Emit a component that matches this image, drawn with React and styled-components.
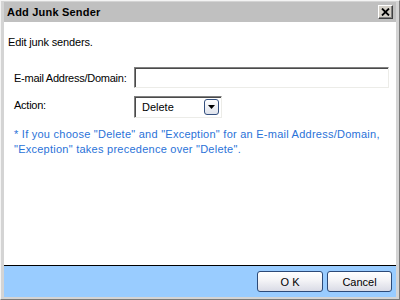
import React from "react";
import styled, { createGlobalStyle } from "styled-components";

const Global = createGlobalStyle`
  html, body { margin: 0; padding: 0; }
  body { width: 400px; height: 300px; overflow: hidden; background: #d6d6d6; }
  * { box-sizing: border-box; }
`;

const Window = styled.div`
  width: 400px;
  height: 300px;
  display: flex;
  flex-direction: column;
  background: #d4d4d4;
  border: 1px solid;
  border-color: #f4f4f4 #7a7a7a #7a7a7a #f4f4f4;
  padding: 1px 3px 2px 3px;
  font-family: "Liberation Sans", Arial, sans-serif;
  font-size: 11px;
  color: #000;
`;

const TitleBar = styled.div`
  height: 20px;
  flex: none;
  background: #c0c0c0;
  display: flex;
  align-items: center;
  justify-content: space-between;
  padding: 0 3px 0 3px;
`;

const Title = styled.span`
  font-weight: bold;
  font-size: 11px;
  letter-spacing: 0.2px;
  color: #000;
`;

const CloseButton = styled.div`
  width: 15px;
  height: 14px;
  background: #d4d0c8;
  border: 1px solid;
  border-color: #ffffff #404040 #404040 #ffffff;
  box-shadow: inset -1px -1px 0 #808080;
  display: flex;
  align-items: center;
  justify-content: center;
`;

const Body = styled.div`
  flex: 1;
  background: #fff;
  padding: 13px 4px 0 4px;
  display: flex;
  flex-direction: column;
`;

const Intro = styled.div`
  line-height: 14px;
  margin-bottom: 18px;
  letter-spacing: -0.15px;
`;

const Form = styled.div`
  padding-left: 6px;
  display: flex;
  flex-direction: column;
  gap: 8px;
`;

const Row = styled.div`
  display: grid;
  grid-template-columns: 120px 1fr;
  align-items: center;
`;

const Label = styled.label`
  line-height: 14px;
  letter-spacing: -0.25px;
  margin-top: ${(p) => p.$shift || 0}px;
`;

const TextBox = styled.input`
  width: 255px;
  height: 21px;
  margin: 0;
  border: 1px solid;
  border-color: #808080 #ecece8 #ecece8 #808080;
  box-shadow: inset 1px 1px 0 #4a4a4a;
  background: #fff;
  outline: none;
  font: inherit;
`;

const SelectBox = styled.div`
  width: 88px;
  height: 22px;
  border: 1px solid;
  border-color: #808080 #ecece8 #ecece8 #808080;
  box-shadow: inset 1px 1px 0 #4a4a4a;
  display: flex;
  align-items: center;
  justify-content: space-between;
  padding: 0 2px 0 7px;
  background: #fff;
`;

const DropButton = styled.div`
  width: 15px;
  height: 16px;
  border: 1px solid #34507f;
  border-radius: 3px;
  background: linear-gradient(#ffffff, #dfe3ec);
  display: flex;
  align-items: center;
  justify-content: center;
`;

const Note = styled.div`
  color: #2a72d8;
  line-height: 15px;
  margin-top: 1px;
  letter-spacing: 0.25px;
`;

const Footer = styled.div`
  height: 32px;
  flex: none;
  background: #99ccff;
  border-top: 1px solid #000;
  display: flex;
  align-items: center;
  justify-content: flex-end;
  gap: 4px;
  padding: 0 4px 0 0;
`;

const Button = styled.button`
  width: ${(p) => p.$w}px;
  height: 21px;
  margin: 0;
  border: 1px solid #2c4a78;
  border-radius: 3px;
  background: linear-gradient(#ffffff 0%, #f3f3f6 45%, #d9dbe6 100%);
  font-family: "Liberation Sans", Arial, sans-serif;
  font-size: 11px;
  color: #000;
  padding: 0;
`;

export default function App() {
  return (
    <>
      <Global />
      <Window>
        <TitleBar>
          <Title>Add Junk Sender</Title>
          <CloseButton>
            <svg width="9" height="8" viewBox="0 0 9 8">
              <path d="M1 0.5 L8 7.5 M8 0.5 L1 7.5" stroke="#000" strokeWidth="1.8" />
            </svg>
          </CloseButton>
        </TitleBar>
        <Body>
          <Intro>Edit junk senders.</Intro>
          <Form>
            <Row>
              <Label>E-mail Address/Domain:</Label>
              <TextBox type="text" />
            </Row>
            <Row>
              <Label $shift={-5}>Action:</Label>
              <SelectBox>
                <span>Delete</span>
                <DropButton>
                  <svg width="7" height="4" viewBox="0 0 7 4">
                    <path d="M0 0 L7 0 L3.5 4 Z" fill="#000" />
                  </svg>
                </DropButton>
              </SelectBox>
            </Row>
            <Note>
              * If you choose "Delete" and "Exception" for an E-mail Address/Domain,
              <br />
              "Exception" takes precedence over "Delete".
            </Note>
          </Form>
        </Body>
        <Footer>
          <Button $w={66}>O K</Button>
          <Button $w={65}>Cancel</Button>
        </Footer>
      </Window>
    </>
  );
}
